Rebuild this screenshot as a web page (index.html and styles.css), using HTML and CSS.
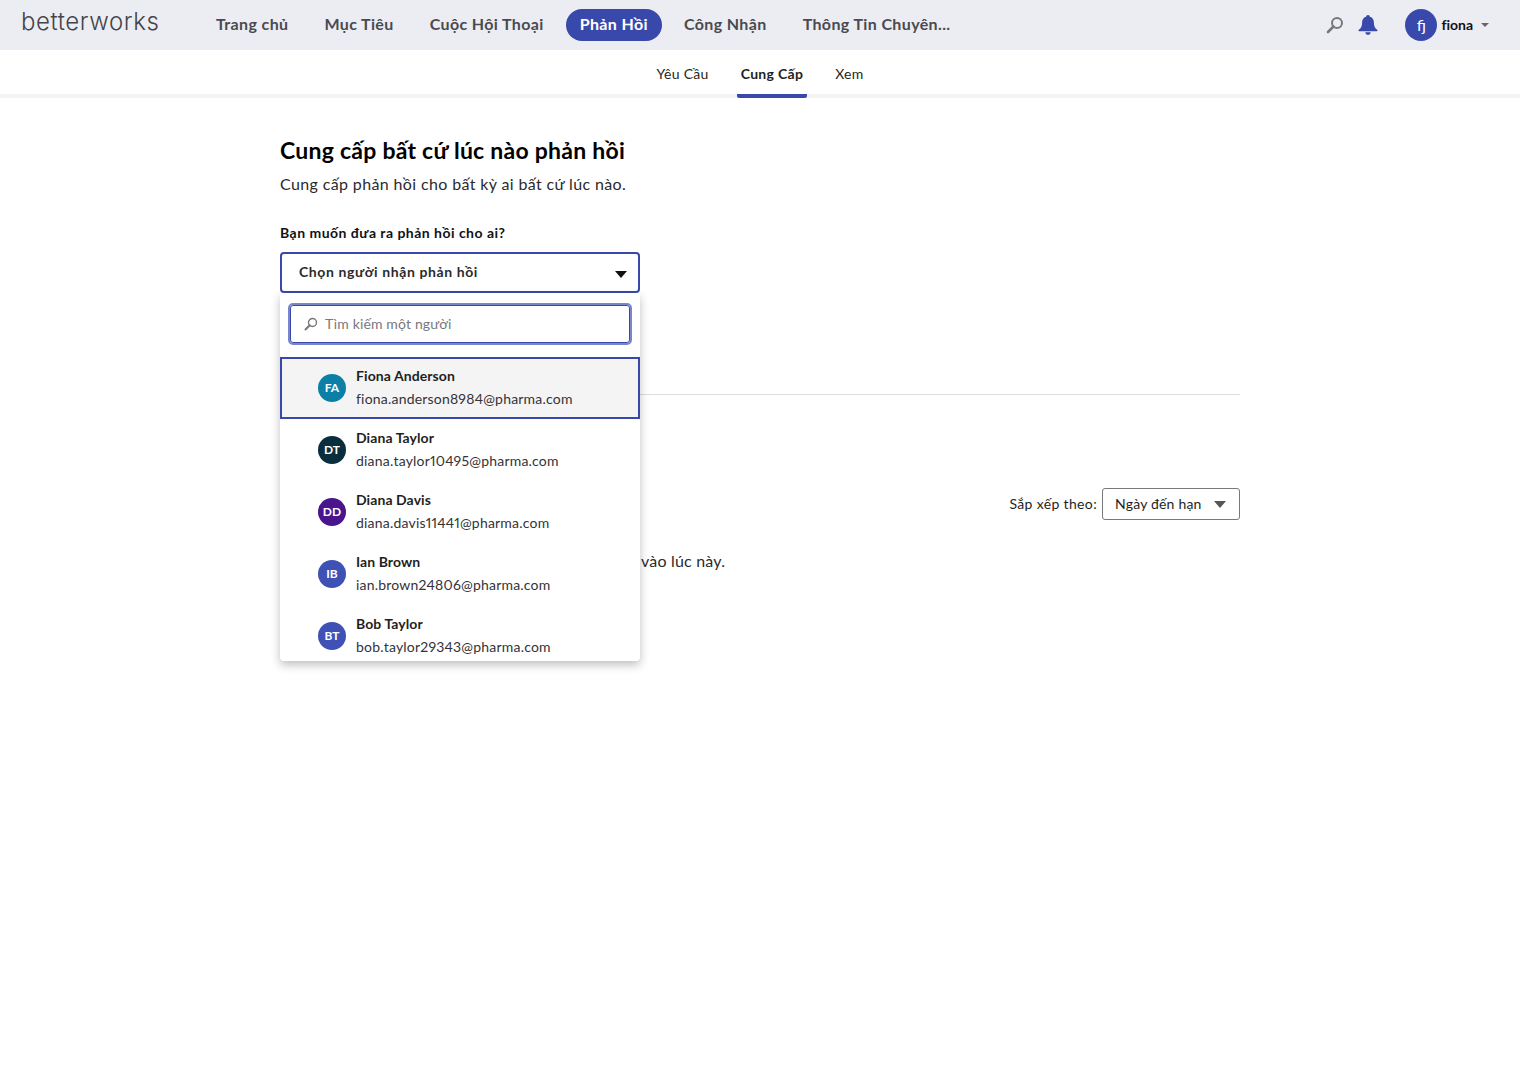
FILE: index.html
```html
<!DOCTYPE html>
<html lang="vi">
  <head>
    <meta name="viewport" content="width=device-width, initial-scale=1" />
    <title>Betterworks</title>
    <link rel="stylesheet" href="styles.css">
  </head>

  <body>
    <header class="topbar">
      <div class="logo">betterworks</div>
      <nav class="mainnav">
        <a class="navitem">Trang chủ</a>
        <a class="navitem">Mục Tiêu</a>
        <a class="navitem">Cuộc Hội Thoại</a>
        <a class="navitem active">Phản Hồi</a>
        <a class="navitem">Công Nhận</a>
        <a class="navitem">Thông Tin Chuyên...</a>
      </nav>
      <div class="topright">
        <svg class="searchicon" width="18" height="18" viewBox="0 0 18 18">
          <circle cx="11" cy="7" r="5" fill="none" stroke="#77777c" stroke-width="2" />
          <path d="M7.5 10.5L2 16" stroke="#77777c" stroke-width="2.6" stroke-linecap="round" />
        </svg>
        <svg class="bell" width="20" height="20" viewBox="0 0 20 20">
          <path d="M10 0c1.100 0 1.800.8 1.900 1.800 2.800.8 4 3 4 5.900 0 3.300.9 5.300 3.300 7.100.6.500.3 1.400-.5 1.400H1.300c-.8 0-1.100-.9-.5-1.400 2.400-1.800 3.300-3.800 3.300-7.100 0-2.900 1.200-5.100 4-5.900C8.200.8 8.900 0 10 0z" fill="#3949ab" />
          <path d="M7.200 17.200h5.600c-.3 1.700-1.400 2.600-2.800 2.600s-2.500-.9-2.800-2.600z" fill="#3949ab" />
        </svg>
        <div class="useravatar">fj</div>
        <span class="username">fiona</span>
        <span class="usercaret"></span>
      </div>
    </header>

    <nav class="subnav">
      <a class="subitem">Yêu Cầu</a>
      <a class="subitem current">Cung Cấp</a>
      <a class="subitem">Xem</a>
    </nav>

    <main class="content">
      <h1 class="title">Cung cấp bất cứ lúc nào phản hồi</h1>
      <p class="subtitle">Cung cấp phản hồi cho bất kỳ ai bất cứ lúc nào.</p>

      <div class="picker">
        <label class="pickerlabel">Bạn muốn đưa ra phản hồi cho ai?</label>
        <div class="select">
          <span class="selecttext">Chọn người nhận phản hồi</span>
          <span class="selectcaret"></span>
        </div>

        <div class="dropdown">
          <div class="searchwrap">
            <div class="searchbox">
              <svg width="14" height="14" viewBox="0 0 14 14">
                <circle cx="8.500" cy="5.500" r="4" fill="none" stroke="#77777c" stroke-width="1.400" />
                <path d="M5.700 8.300L1.500 12.500" stroke="#77777c" stroke-width="2" stroke-linecap="round" />
              </svg>
              <span class="searchtext">Tìm kiếm một người</span>
            </div>
          </div>
          <div class="person selected">
            <div class="avatar teal">FA</div>
            <div class="persontext">
              <div class="name">Fiona Anderson</div>
              <div class="email">fiona.anderson8984@pharma.com</div>
            </div>
          </div>
          <div class="person">
            <div class="avatar navy">DT</div>
            <div class="persontext">
              <div class="name">Diana Taylor</div>
              <div class="email">diana.taylor10495@pharma.com</div>
            </div>
          </div>
          <div class="person">
            <div class="avatar purple">DD</div>
            <div class="persontext">
              <div class="name">Diana Davis</div>
              <div class="email">diana.davis11441@pharma.com</div>
            </div>
          </div>
          <div class="person">
            <div class="avatar blue">IB</div>
            <div class="persontext">
              <div class="name">Ian Brown</div>
              <div class="email">ian.brown24806@pharma.com</div>
            </div>
          </div>
          <div class="person">
            <div class="avatar blue">BT</div>
            <div class="persontext">
              <div class="name">Bob Taylor</div>
              <div class="email">bob.taylor29343@pharma.com</div>
            </div>
          </div>
        </div>
      </div>

      <hr class="divider" />

      <div class="sortrow">
        <span class="sortlabel">Sắp xếp theo:</span>
        <div class="sortselect">
          <span class="sorttext">Ngày đến hạn</span>
          <span class="sortcaret"></span>
        </div>
      </div>

      <p class="empty">vào lúc này.</p>
    </main>
  </body>
</html>
```

FILE: styles.css
```css
body {
  margin: 0;
  min-height: 1080px;
  background-color: #ffffff;
  color: #1f1f23;
  font-family: Lato, "Noto Sans", sans-serif;
}

.topbar {
  display: flex;
  align-items: center;
  height: 50px;
  background: #ecedf2;
}

.logo {
  width: 180px;
  padding: 0 0 8px 21px;
  box-sizing: border-box;
  font-family: Inter, sans-serif;
  font-size: 24px;
  font-weight: 300;
  letter-spacing: 0.600px;
  color: #444449;
}

.mainnav {
  display: flex;
  gap: 8px;
  margin-left: 22px;
}

.navitem {
  height: 32px;
  line-height: 30px;
  padding: 0 14px;
  border-radius: 16px;
  font-size: 16px;
  font-weight: 700;
  letter-spacing: 0.370px;
  color: #4a4a50;
}

.navitem.active {
  background: #3949ab;
  color: #ffffff;
}

.topright {
  display: flex;
  align-items: center;
  margin-left: auto;
  padding-right: 31px;
}

.searchicon {
  margin-right: 14px;
}

.bell {
  margin-right: 27px;
}

.useravatar {
  width: 32px;
  height: 32px;
  line-height: 32px;
  border-radius: 50%;
  background: #3949ab;
  color: #ffffff;
  font-size: 16px;
  text-align: center;
}

.username {
  margin: 0 8px 2px 4px;
  font-size: 14px;
  font-weight: 700;
  font-variant-ligatures: none;
  color: #111114;
}

.usercaret {
  border-left: 4px solid transparent;
  border-right: 4px solid transparent;
  border-top: 4px solid #66666c;
}

.subnav {
  display: flex;
  justify-content: center;
  gap: 24px;
  height: 44px;
  border-bottom: 4px solid #f4f4f5;
}

.subitem {
  height: 48px;
  line-height: 48px;
  padding: 0 4px;
  box-sizing: border-box;
  font-size: 14px;
  letter-spacing: 0.300px;
  color: #1f1f23;
}

.subitem.current {
  font-weight: 700;
  border-bottom: 4px solid #3949ab;
  border-radius: 2px;
}

.content {
  width: 960px;
  margin: 0 auto;
  padding-top: 38px;
}

.title {
  margin: 0;
  font-size: 23px;
  line-height: 28px;
  font-weight: 700;
  letter-spacing: 0.250px;
  color: #000000;
}

.subtitle {
  margin: 10px 0 0;
  font-size: 16px;
  line-height: 20px;
  letter-spacing: 0.370px;
  color: #2a2a2e;
}

.picker {
  position: relative;
  width: 360px;
  margin-top: 30px;
}

.pickerlabel {
  display: block;
  margin-bottom: 10px;
  font-size: 14px;
  line-height: 18px;
  font-weight: 700;
  letter-spacing: 0.480px;
  color: #111114;
}

.select {
  display: flex;
  align-items: center;
  justify-content: space-between;
  height: 41px;
  padding: 0 11px 0 17px;
  box-sizing: border-box;
  border: 2px solid #3949ab;
  border-radius: 4px;
  font-size: 14px;
  font-weight: 700;
  letter-spacing: 0.600px;
  color: #2a2a2e;
}

.selecttext {
  margin-bottom: 2px;
}

.selectcaret {
  border-left: 6px solid transparent;
  border-right: 6px solid transparent;
  border-top: 7px solid #111114;
  margin-top: 3px;
}

.dropdown {
  position: absolute;
  top: 69px;
  left: 0;
  width: 360px;
  height: 368px;
  overflow: hidden;
  background: #ffffff;
  border-radius: 0 0 4px 4px;
  box-shadow: 0 4px 10px rgba(0, 0, 0, 0.25);
}

.searchwrap {
  padding: 12px 10px 14px;
}

.searchbox {
  display: flex;
  align-items: center;
  gap: 7px;
  height: 38px;
  padding-left: 13px;
  box-sizing: border-box;
  border: 1px solid #3949ab;
  border-radius: 3px;
  box-shadow: 0 0 0 2px #7986cb;
  font-size: 14px;
  letter-spacing: 0.150px;
  color: #77777c;
}

.searchtext {
  margin-bottom: 2px;
}

.person {
  display: flex;
  align-items: center;
  gap: 10px;
  height: 62px;
  padding-left: 38px;
  box-sizing: border-box;
  font-size: 14px;
  letter-spacing: 0.200px;
}

.person.selected {
  background: #f4f4f5;
  border: 2px solid #3949ab;
  padding-left: 36px;
}

.persontext {
  margin-bottom: 2px;
}

.avatar {
  width: 28px;
  height: 28px;
  line-height: 28px;
  border-radius: 50%;
  color: #ffffff;
  font-size: 12px;
  font-weight: 700;
  letter-spacing: 0;
  text-align: center;
}

.teal {
  background: #0b7fa6;
}

.navy {
  background: #0a2e3c;
}

.purple {
  background: #4a148c;
}

.blue {
  background: #3f51b5;
}

.name {
  font-weight: 700;
  line-height: 20px;
  letter-spacing: 0.080px;
  color: #1f1f23;
}

.email {
  margin-top: 3px;
  line-height: 20px;
  font-variant-numeric: proportional-nums;
  color: #333338;
}

.divider {
  height: 1px;
  margin: 101px 0 0;
  border: 0;
  background: #dddddf;
}

.sortrow {
  display: flex;
  align-items: center;
  justify-content: flex-end;
  gap: 5px;
  margin-top: 93px;
}

.sortlabel {
  margin-bottom: 2px;
  font-size: 14px;
  letter-spacing: 0.350px;
}

.sortselect {
  display: flex;
  align-items: center;
  justify-content: space-between;
  width: 138px;
  height: 32px;
  padding: 0 13px 0 12px;
  box-sizing: border-box;
  border: 1px solid #77777c;
  border-radius: 3px;
  font-size: 14px;
  letter-spacing: 0.200px;
}

.sorttext {
  margin-bottom: 2px;
}

.sortcaret {
  border-left: 6px solid transparent;
  border-right: 6px solid transparent;
  border-top: 7px solid #55555a;
  margin-top: 1px;
}

.empty {
  margin: 31px 0 0 361px;
  font-size: 16px;
  line-height: 20px;
  letter-spacing: 0.200px;
  color: #2a2a2e;
}
```
